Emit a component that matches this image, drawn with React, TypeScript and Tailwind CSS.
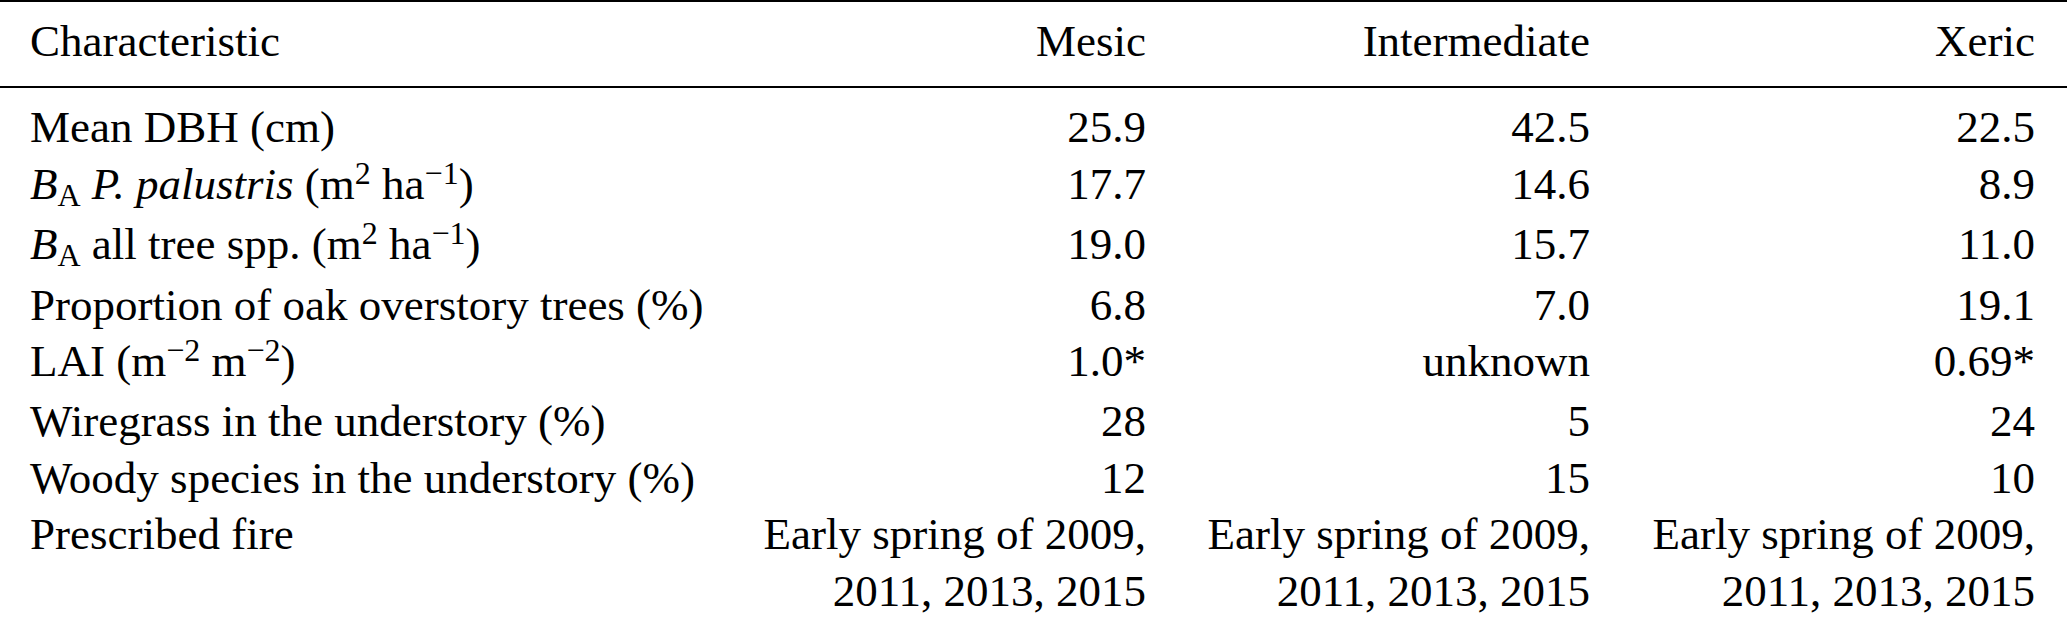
import React from "react";

type Row = {
  label: React.ReactNode;
  values: React.ReactNode[];
};

const Sup = ({ children }: { children: React.ReactNode }) => (
  <span className="relative -top-[15px] text-[32px]">{children}</span>
);

const BA = () => (
  <>
    <i>B</i>
    <span className="relative top-[7px] text-[32px]">A</span>
  </>
);

const fire = (
  <>
    Early spring of 2009,
    <br />
    2011, 2013, 2015
  </>
);

const rows: Row[] = [
  { label: "Mean DBH (cm)", values: ["25.9", "42.5", "22.5"] },
  {
    label: (
      <>
        <BA /> <i>P. palustris</i> (m<Sup>2</Sup> ha<Sup>−1</Sup>)
      </>
    ),
    values: ["17.7", "14.6", "8.9"],
  },
  {
    label: (
      <>
        <BA /> all tree spp. (m<Sup>2</Sup> ha<Sup>−1</Sup>)
      </>
    ),
    values: ["19.0", "15.7", "11.0"],
  },
  { label: "Proportion of oak overstory trees (%)", values: ["6.8", "7.0", "19.1"] },
  {
    label: (
      <>
        LAI (m<Sup>−2</Sup> m<Sup>−2</Sup>)
      </>
    ),
    values: ["1.0*", "unknown", "0.69*"],
  },
  { label: "Wiregrass in the understory (%)", values: ["28", "5", "24"] },
  { label: "Woody species in the understory (%)", values: ["12", "15", "10"] },
  { label: "Prescribed fire", values: [fire, fire, fire] },
];

const cols = "grid grid-cols-[667px_449px_444px_445px] pl-[30px]";

export default function App() {
  return (
    <div className="w-[2067px] h-[627px] bg-white text-black font-['Liberation_Serif',serif] text-[45px] leading-[56.4px]">
      <div className="h-[2px] bg-black" />

      {/* Header */}
      <div className={`${cols} pt-[11px] pb-[17px]`}>
        <div>Characteristic</div>
        <div className="text-right">Mesic</div>
        <div className="text-right">Intermediate</div>
        <div className="text-right">Xeric</div>
      </div>
      <div className="h-[2px] bg-black" />

      {/* Body */}
      <div className="pt-[11px] pb-[18px]">
        {rows.map((row, i) => (
          <div key={i} className={cols}>
            <div className="whitespace-nowrap">{row.label}</div>
            {row.values.map((v, j) => (
              <div key={j} className="text-right whitespace-nowrap">
                {v}
              </div>
            ))}
          </div>
        ))}
      </div>
      <div className="h-[3px] bg-[#222]" />
    </div>
  );
}
